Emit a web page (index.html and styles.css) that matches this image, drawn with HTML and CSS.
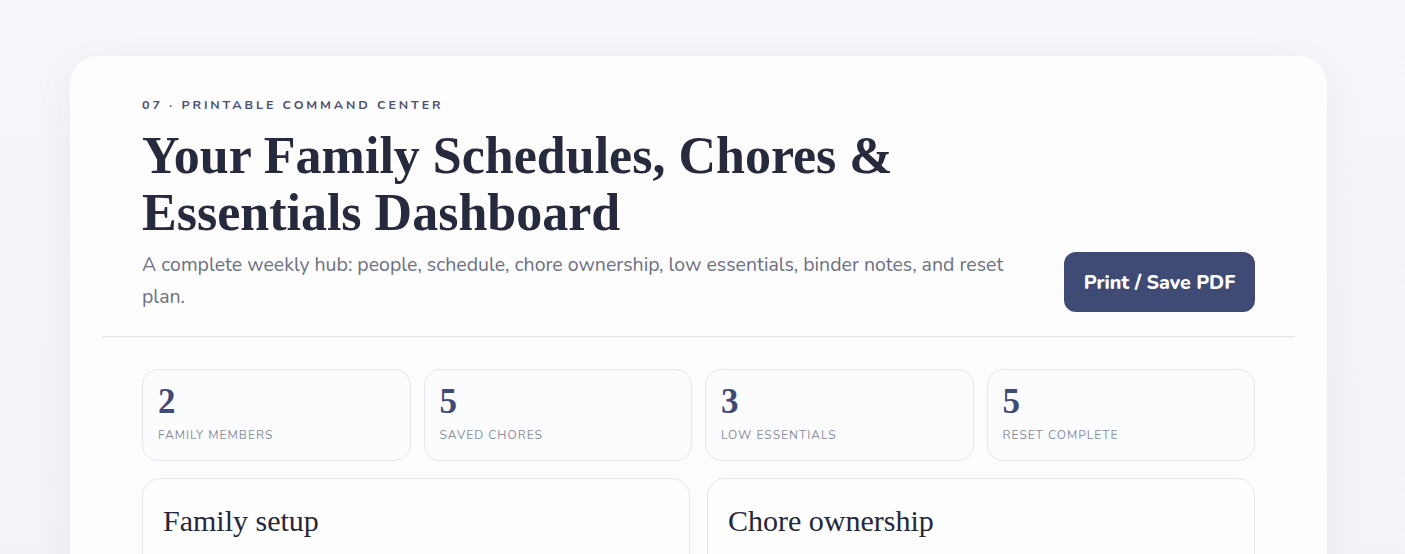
FILE: index.html
```html
<!DOCTYPE html>
<html lang="en">
<head>
    <meta charset="UTF-8">
    <meta name="viewport" content="width=device-width, initial-scale=1.0">
    <title>Family Command Center</title>
    <link rel="stylesheet" href="styles.css">
</head>
<body>

    <main class="sheet">
        <header class="sheet-header">
            <div class="intro">
                <p class="eyebrow">07 · Printable Command Center</p>
                <h1 class="title">Your Family Schedules, Chores &amp; Essentials Dashboard</h1>
                <p class="lead">A complete weekly hub: people, schedule, chore ownership, low essentials, binder notes, and reset plan.</p>
            </div>
            <button class="print-btn" type="button">Print / Save PDF</button>
        </header>

        <section class="stats">
            <div class="stat">
                <div class="stat-num">2</div>
                <div class="stat-label">Family members</div>
            </div>
            <div class="stat">
                <div class="stat-num">5</div>
                <div class="stat-label">Saved chores</div>
            </div>
            <div class="stat">
                <div class="stat-num">3</div>
                <div class="stat-label">Low essentials</div>
            </div>
            <div class="stat">
                <div class="stat-num">5</div>
                <div class="stat-label">Reset complete</div>
            </div>
        </section>

        <section class="panels">
            <div class="panel">
                <h2 class="panel-title">Family setup</h2>
                <div class="panel-body"></div>
            </div>
            <div class="panel">
                <h2 class="panel-title">Chore ownership</h2>
                <div class="panel-body"></div>
            </div>
        </section>
    </main>

</body>
</html>
```

FILE: styles.css
```css
body {
    margin: 0;
    padding: 56px 78px 40px 70px;
    background: linear-gradient(180deg, #f5f6f9 0%, #f1f2f7 100%);
    font-family: "Nunito", "Lato", "Open Sans", sans-serif;
    color: #25283a;
}

.sheet {
    background-color: #fdfdfe;
    border-radius: 28px;
    padding: 32px;
    box-shadow: 0 12px 40px rgba(40, 48, 90, 0.06);
}

.sheet-header {
    display: flex;
    align-items: flex-end;
    justify-content: space-between;
    gap: 40px;
    padding: 8px 40px 23px;
    border-bottom: 1px solid #e4e6ec;
}

.intro {
    max-width: 880px;
}

.eyebrow {
    margin: 0 0 14px;
    font-size: 12.5px;
    font-weight: 700;
    letter-spacing: 2.9px;
    text-transform: uppercase;
    color: #4b5072;
}

.title {
    margin: 0 0 8px;
    max-width: 790px;
    font-family: "Liberation Serif", "DejaVu Serif", serif;
    font-size: 52px;
    font-weight: 700;
    line-height: 57px;
    color: #262a3c;
}

.lead {
    margin: 0;
    font-size: 19.5px;
    line-height: 32px;
    color: #6c7082;
}

.print-btn {
    margin-bottom: 1px;
    padding: 0 18px;
    height: 60px;
    width: 191px;
    border: none;
    border-radius: 12px;
    background-color: #3f4a75;
    color: #fff;
    font-family: inherit;
    font-size: 19.5px;
    font-weight: 800;
    cursor: pointer;
}

.stats {
    display: grid;
    grid-template-columns: repeat(4, 1fr);
    gap: 13px;
    margin: 32px 40px 17px;
}

.stat {
    height: 92px;
    box-sizing: border-box;
    padding: 14px 15px;
    border: 1px solid #e4e6ee;
    border-radius: 16px;
    background-color: #fbfcfe;
}

.stat-num {
    font-family: "Liberation Serif", "DejaVu Serif", serif;
    font-size: 35px;
    font-weight: 700;
    line-height: 36px;
    color: #3f4a75;
}

.stat-label {
    margin-top: 7px;
    font-size: 12px;
    letter-spacing: 1px;
    text-transform: uppercase;
    color: #8a8e9e;
}

.panels {
    display: grid;
    grid-template-columns: 1fr 1fr;
    gap: 17px;
    margin: 0 40px;
}

.panel {
    padding: 24px 20px;
    border: 1px solid #e4e6ee;
    border-radius: 18px;
    background-color: #fefefe;
}

.panel-title {
    margin: 0;
    font-family: "Liberation Serif", "DejaVu Serif", serif;
    font-size: 30px;
    font-weight: 400;
    line-height: 36px;
    color: #25283a;
}

.panel-body {
    height: 200px;
}
```
